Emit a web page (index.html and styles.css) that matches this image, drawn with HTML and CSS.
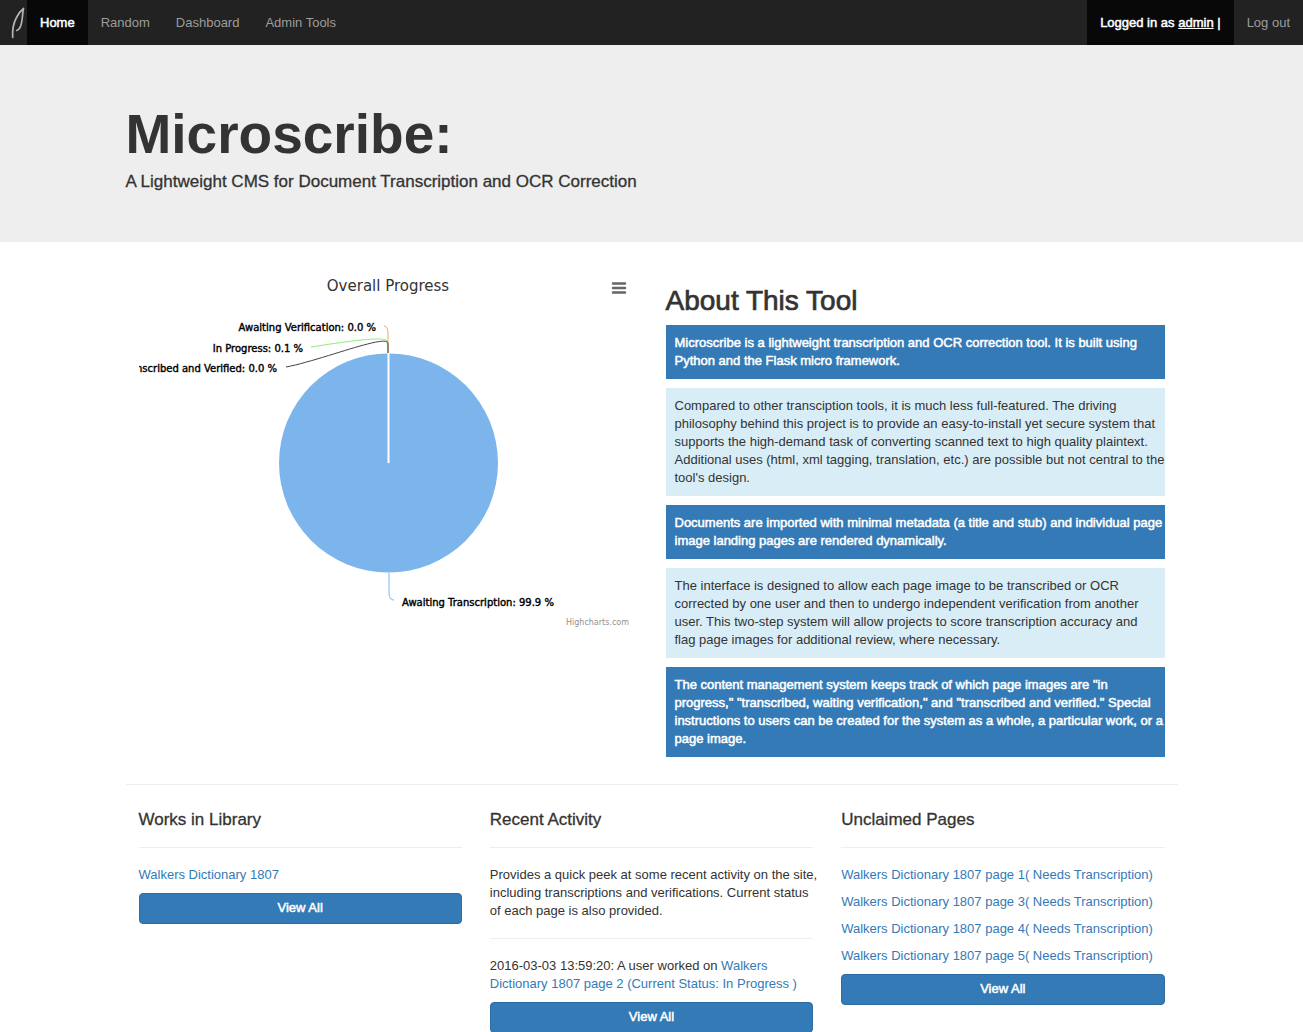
FILE: index.html
```html
<!DOCTYPE html>
<html lang="en">
<head>
<meta charset="utf-8">
<meta name="viewport" content="width=device-width, initial-scale=1">
<title>Microscribe</title>
<link rel="stylesheet" href="styles.css">
</head>
<body>
<nav class="navbar">
  <a class="brand" href="#" aria-label="Microscribe">
    <svg width="27" height="45" viewBox="0 0 27 45" fill="none" stroke="#b4b4b4" stroke-width="1.700" stroke-linecap="round" stroke-linejoin="round"><path d="M12.700 37.500C12.300 32 13 24 16.500 17.500C18.500 13.500 21 10.500 23.500 8.500C22.800 11 22.800 13 22.400 17C22 21 21.500 24.500 20 27.500C19 29.300 18 30.200 16.700 30.500"/></svg>
  </a>
  <ul class="nav">
    <li><a class="nav-link active" href="#">Home</a></li>
    <li><a class="nav-link" href="#">Random</a></li>
    <li><a class="nav-link" href="#">Dashboard</a></li>
    <li><a class="nav-link" href="#">Admin Tools</a></li>
  </ul>
  <ul class="nav nav-right">
    <li><a class="nav-link active" href="#">Logged in as <u>admin</u> |</a></li>
    <li><a class="nav-link" href="#">Log out</a></li>
  </ul>
</nav>
<header class="jumbotron">
  <div class="container">
    <h1>Microscribe:</h1>
    <h4>A Lightweight CMS for Document Transcription and OCR Correction</h4>
  </div>
</header>
<main class="container">
  <div class="row halves">
    <section class="chart">
      <svg class="pie" viewBox="0 0 499 370" role="img" aria-label="Overall Progress">
        <text class="chart-title" x="249" y="31" text-anchor="middle">Overall Progress</text>
        <circle cx="249.500" cy="203" r="109.500" fill="#7cb5ec"/>
        <path d="M249.500 203V93" stroke="#fff" stroke-width="2"/>
        <g fill="none" stroke-width="1">
          <path d="M245 66C249 66 249 72 249 76V93" stroke="#f7a35c"/>
          <path d="M172 87C210 81 246 76 248 81L249 93" stroke="#90ed7d"/>
          <path d="M147 107C180 101 247 74 249 83V93" stroke="#434348"/>
          <path d="M255 340C250 340 250 334 250 330V313" stroke="#7cb5ec"/>
        </g>
        <g class="labels">
          <text x="237" y="71" text-anchor="end">Awaiting Verification: 0.0 %</text>
          <text x="164" y="92" text-anchor="end">In Progress: 0.1 %</text>
          <text x="138" y="112" text-anchor="end">nscribed and Verified: 0.0 %</text>
          <text x="263" y="346">Awaiting Transcription: 99.9 %</text>
        </g>
        <text class="credit" x="490" y="365" text-anchor="end">Highcharts.com</text>
      </svg>
      <button class="chart-menu" type="button" aria-label="Chart menu">
        <svg width="16" height="14" viewBox="0 0 16 14" stroke="#666" stroke-width="2.500" stroke-linecap="round"><path d="M2 2.500H14M2 7H14M2 11.500H14"/></svg>
      </button>
    </section>
    <section class="about">
      <h2>About This Tool</h2>
      <p class="primary">Microscribe is a lightweight transcription and OCR correction tool. It is built using Python and the Flask micro framework.</p>
      <p class="info">Compared to other transciption tools, it is much less full-featured. The driving philosophy behind this project is to provide an easy-to-install yet secure system that supports the high-demand task of converting scanned text to high quality plaintext. Additional uses (html, xml tagging, translation, etc.) are possible but not central to the tool's design.</p>
      <p class="primary">Documents are imported with minimal metadata (a title and stub) and individual page image landing pages are rendered dynamically.</p>
      <p class="info">The interface is designed to allow each page image to be transcribed or OCR corrected by one user and then to undergo independent verification from another user. This two-step system will allow projects to score transcription accuracy and<br>flag page images for additional review, where necessary.</p>
      <p class="primary">The content management system keeps track of which page images are "in progress," "transcribed, waiting verification," and "transcribed and verified." Special instructions to users can be created for the system as a whole, a particular work, or a page image.</p>
    </section>
  </div>
  <hr class="divider">
  <div class="row thirds">
    <section>
      <h4>Works in Library</h4>
      <hr>
      <p><a href="#">Walkers Dictionary 1807</a></p>
      <button class="btn" type="button">View All</button>
    </section>
    <section>
      <h4>Recent Activity</h4>
      <hr>
      <p>Provides a quick peek at some recent activity on the site, including transcriptions and verifications. Current status of each page is also provided.</p>
      <hr>
      <p>2016-03-03 13:59:20: A user worked on <a href="#">Walkers Dictionary 1807 page 2 (Current Status: In Progress )</a></p>
      <button class="btn" type="button">View All</button>
    </section>
    <section>
      <h4>Unclaimed Pages</h4>
      <hr>
      <p><a href="#">Walkers Dictionary 1807 page 1( Needs Transcription)</a></p>
      <p><a href="#">Walkers Dictionary 1807 page 3( Needs Transcription)</a></p>
      <p><a href="#">Walkers Dictionary 1807 page 4( Needs Transcription)</a></p>
      <p><a href="#">Walkers Dictionary 1807 page 5( Needs Transcription)</a></p>
      <button class="btn" type="button">View All</button>
    </section>
  </div>
</main>
</body>
</html>
```
FILE: styles.css
```css
* {
  box-sizing: border-box;
}

body {
  margin: 0;
  color: #333;
  background: #fff;
  font: 13px/18px "Helvetica Neue", "Liberation Sans", Arial, sans-serif;
}

a {
  color: #337ab7;
  text-decoration: none;
}

h1,
h2,
h4 {
  margin: 0;
  font-weight: 400;
}

h4 {
  font-size: 17px;
  line-height: 18px;
  -webkit-text-stroke: 0.3px currentColor;
}

p {
  margin: 0 0 9px;
}

hr {
  margin: 18px 0;
  border: 0;
  border-top: 1px solid #eee;
}

.navbar {
  display: flex;
  height: 45px;
  background: #222;
}

.brand {
  display: flex;
}

.nav {
  display: flex;
  margin: 0;
  padding: 0;
  list-style: none;
}

.nav-right {
  margin-left: auto;
}

.nav-link {
  display: block;
  padding: 14px 13px 13px;
  color: #9d9d9d;
}

.nav-link.active {
  color: #fff;
  background: #080808;
  -webkit-text-stroke: 0.5px currentColor;
}

.jumbotron {
  padding: 58px 0 51px;
  background: #eee;
}

h1 {
  margin-bottom: 8px;
  font-size: 55px;
  font-weight: 700;
  line-height: 62px;
}

.container {
  max-width: 1052px;
  margin: 0 auto;
}

.row {
  display: grid;
  column-gap: 28px;
  padding: 0 13px;
}

.halves {
  grid-template-columns: 1fr 1fr;
  padding-top: 18px;
}

.thirds {
  grid-template-columns: repeat(3, 1fr);
}

.thirds p {
  margin-right: -6px;
}

.chart {
  position: relative;
}

.pie {
  display: block;
  width: 100%;
  overflow: hidden;
  font-family: "Lucida Grande", "DejaVu Sans", sans-serif;
}

.chart-title {
  font-size: 15px;
  fill: #333;
}

.labels {
  font-size: 10px;
  fill: #000;
  stroke: #000;
  stroke-width: 0.4px;
}

.credit {
  font-size: 8px;
  fill: #909090;
}

.chart-menu {
  position: absolute;
  top: 21px;
  right: 11px;
  display: flex;
  padding: 0;
  border: 0;
  background: none;
}

.about {
  padding-top: 26px;
}

h2 {
  margin-bottom: 9px;
  font-size: 28px;
  line-height: 30px;
  -webkit-text-stroke: 0.7px currentColor;
}

.primary,
.info {
  padding: 9px 0 9px 9px;
}

.primary {
  color: #fff;
  background: #337ab7;
  -webkit-text-stroke: 0.5px currentColor;
}

.info {
  background: #d9edf7;
}

.divider {
  margin: 18px 0 26px;
}

.btn {
  display: block;
  width: 100%;
  padding: 5px 10px 6px;
  border: 1px solid #2e6da4;
  border-radius: 4px;
  color: #fff;
  background: #337ab7;
  font: inherit;
  -webkit-text-stroke: 0.5px currentColor;
}
```
